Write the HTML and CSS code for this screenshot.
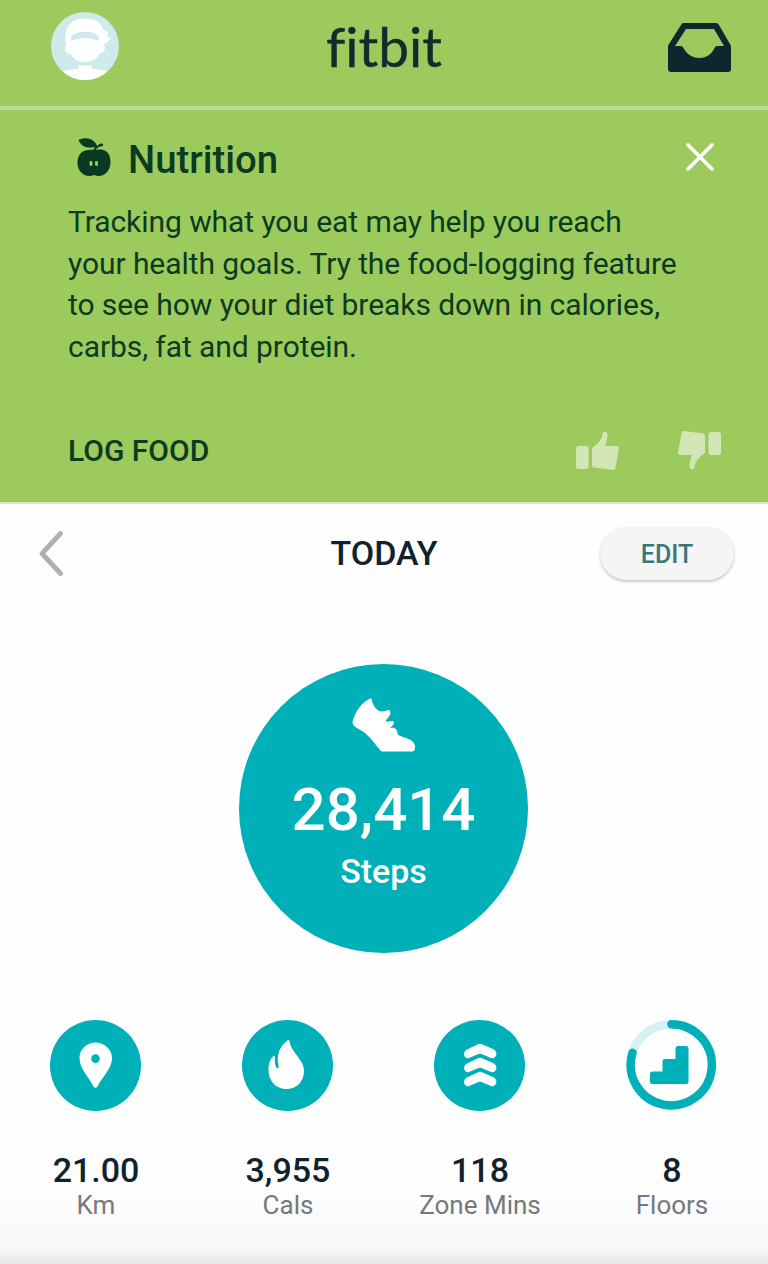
FILE: index.html
```html
<!DOCTYPE html>
<html lang="en">
<head>
<meta charset="utf-8">
<title>Fitbit Today</title>
<link rel="stylesheet" href="styles.css">
</head>
<body>
<header class="topbar">
  <svg class="avatar" viewBox="0 0 68 68">
    <defs><clipPath id="face"><circle cx="34" cy="34" r="34"/></clipPath></defs>
    <circle cx="34" cy="34" r="34" fill="#d0e9ea"/>
    <g clip-path="url(#face)" fill="#fff">
      <path d="M15 33C13 18 17 7 33 6.500C42 6 50 10 52 17C54 20 56 20 58 19C56 22 56 24 57 25L60 27C57 29 56 31 53 32C55 37 53 42 49 41C46 47 41 50 34 50C27 50 22 47 20 42C15 42 13 37 15 33Z"/>
      <path d="M11 61C14 57 20 58 27 57L28 53L31 54L34 53L37 54L40 53L42 57C49 58 54 57 58 61V70H11Z"/>
    </g>
    <path d="M20 29V25C24 18 44 18 48 25V29C40 25 28 25 20 29Z" fill="#d0e9ea"/>
  </svg>
  <h1 class="logo">fitbit</h1>
  <svg class="inbox" viewBox="0 0 63 49">
    <path fill-rule="evenodd" d="M15 0H48Q50 0 51 2L62 21Q63 22 63 24V46Q63 49 60 49H3Q0 49 0 46V24Q0 22 1 21L13 2Q14 0 15 0ZM18 6L7 23H13Q15 23 16 26C23 38 40 38 46 26Q47 23 49 23H56L46 6Z" fill="#10262f"/>
  </svg>
</header>
<section class="tip">
  <div class="tip-head">
    <svg class="apple" viewBox="0 0 34 39">
      <path d="M1.500 2C9-2 18 1 20 8C22 6 24 5 26 6V8C22 8.500 20 9.500 18.500 12C24 11 33 11 33.500 23C34 32 28 38 22 38Q19 38 17 37Q15 38 12 38C6 38 0 32 .5 24C1 14 8 11 16 12L18 9C9 11 4 8 1.500 2Z" fill="#083a22"/>
      <rect x="12.500" y="23" width="3" height="5" rx="1.400" fill="#9dca5c"/><rect x="18" y="23" width="3" height="5" rx="1.400" fill="#9dca5c"/>
    </svg>
    <h2 class="tip-title">Nutrition</h2>
    <svg class="close" viewBox="0 0 28 28"><path d="M2 2L26 26M26 2L2 26" stroke="#fff" stroke-width="3.600" stroke-linecap="round"/></svg>
  </div>
  <p class="tip-text">Tracking what you eat may help you reach<br>your health goals. Try the food-logging feature<br>to see how your diet breaks down in calories,<br>carbs, fat and protein.</p>
  <div class="tip-actions">
    <span class="log">LOG FOOD</span>
    <svg class="thumb" viewBox="0 0 43 39"><path d="M2.500 15H10Q12.500 15 12.500 17.500V35.500Q12.500 38 10 38H2.500Q0 38 0 35.500V17.500Q0 15 2.500 15ZM16 17C22 13 26 8 26.500 3C27-1 32 0 31.500 5Q31 10 29 15H41Q43 15 43 17L39.500 37Q39 39 37 39L18 36.500Q16 36 16 34Z"/></svg>
    <svg class="thumb thumb-down" viewBox="0 0 43 39"><path d="M2.500 15H10Q12.500 15 12.500 17.500V35.500Q12.500 38 10 38H2.500Q0 38 0 35.500V17.500Q0 15 2.500 15ZM16 17C22 13 26 8 26.500 3C27-1 32 0 31.500 5Q31 10 29 15H41Q43 15 43 17L39.500 37Q39 39 37 39L18 36.500Q16 36 16 34Z"/></svg>
  </div>
</section>
<main class="today">
  <div class="daybar">
    <svg class="back" viewBox="0 0 24 45"><path d="M21.500 2.500L3 22.500L21.500 42.500" fill="none" stroke="#b0b0b0" stroke-width="4.800" stroke-linecap="round" stroke-linejoin="round"/></svg>
    <h2 class="day">TODAY</h2>
    <button class="edit">EDIT</button>
  </div>
  <div class="steps">
    <svg class="shoe" viewBox="0 0 63 54"><path d="M18 .5C19 0 20 1 20 3C22 10 27 15 33 13L36 12C38 12 39 14 38 17L35 21C33 23 34 24 37 23.500L40 23C42 23 42.500 25 41 27L38 30C42 29 45 30 46 37C52 40 63 41 63 49Q63 53.500 60 53.500H31Q29 53.500 28 52C23 46 19 40 13 35C8 31 0 29 .5 24C3 14 9 5 18 .5Z" fill="#fff"/></svg>
    <strong class="steps-count">28,414</strong>
    <span class="steps-label">Steps</span>
  </div>
  <div class="stats">
    <div class="stat">
      <svg class="stat-icon" viewBox="0 0 91 91"><circle cx="45.500" cy="45.500" r="45.500" fill="#00b0b9"/><path fill-rule="evenodd" d="M45.500 22.500C54 22.500 62 29 62 38C62 49 52 57 47.500 66.500Q45.500 69 43.500 66.500C39 57 29.500 49 29.500 38C29.500 29 37 22.500 45.500 22.500ZM45.500 34.300A4.300 4.300 0 1 0 45.500 42.900A4.300 4.300 0 1 0 45.500 34.300Z" fill="#fff"/></svg>
      <strong class="value">21.00</strong><span class="label">Km</span>
    </div>
    <div class="stat">
      <svg class="stat-icon" viewBox="0 0 91 91"><circle cx="45.500" cy="45.500" r="45.500" fill="#00b0b9"/><path d="M47.500 21C49 33 62 39 62 51C62 62 54 69 44.500 69C34 69 26.500 61 26.500 50C26.500 44 28 39 31.500 36Q33 35.500 33 37C32.500 42 33 45 34.500 48H36.500C37 44 35 42 36 36C37 28 42 23 46 20Q47.300 19.500 47.500 21Z" fill="#fff"/></svg>
      <strong class="value">3,955</strong><span class="label">Cals</span>
    </div>
    <div class="stat">
      <svg class="stat-icon" viewBox="0 0 91 91"><circle cx="45.500" cy="45.500" r="45.500" fill="#00b0b9"/><path id="chev" d="M33 29.500L44 24.200Q46 23.400 48 24.200L60 29.500Q62.500 31 62.500 34Q61.500 39 57 38L47.500 34Q46 33.400 44.500 34L35 38Q31 39 30 34.500Q30 31 33 29.500Z" fill="#fff"/><use href="#chev" y="14"/><use href="#chev" y="28"/></svg>
      <strong class="value">118</strong><span class="label">Zone Mins</span>
    </div>
    <div class="stat">
      <svg class="stat-icon" viewBox="0 0 91 91"><g fill="none" stroke-width="8.400"><circle cx="45.300" cy="44.800" r="40.600" stroke="#d8f2f3"/><path d="M45.300 4.200A40.600 40.600 0 1 1 6.500 32.800" stroke="#00b0b9" stroke-linecap="round"/></g><path d="M52 26H60Q62.500 26 62.500 28.500V61.500Q62.500 64 60 64H26.500Q24 64 24 61.500V54Q24 51.500 26.500 51.500H36.500V41.500Q36.500 39 39 39H49.500V28.500Q49.500 26 52 26Z" fill="#00b0b9"/></svg>
      <strong class="value">8</strong><span class="label">Floors</span>
    </div>
  </div>
</main>
</body>
</html>
```

FILE: styles.css
```css
* { box-sizing: border-box; }
body { margin: 0; width: 768px; height: 1264px; overflow: hidden; background: #fefefe; font-family: Roboto, sans-serif; }
h1, h2, p { margin: 0; }
svg { display: block; flex: none; }
.topbar { height: 110px; padding: 12px 37px 0 51px; display: grid; grid-template-columns: 1fr auto 1fr; align-items: start; background: #9dca5c; border-bottom: 4px solid #bddb90; }
.avatar { width: 68px; height: 68px; }
.logo { margin-right: 14px; font: 400 55px/68px Lato, sans-serif; color: #102d2d; font-variant-ligatures: none; -webkit-text-stroke: .4px #102d2d; }
.inbox { width: 63px; height: 49px; margin-top: 11px; justify-self: end; }
.tip { height: 394px; padding: 17px 47px 0 68px; background: #9dca5c; border-bottom: 2px solid #d5e7bf; color: #0b3b20; }
.tip-head { display: flex; height: 64px; align-items: center; padding: 0 7px 0 9px; }
.apple { width: 34px; height: 39px; margin-top: -4px; }
.tip-title { flex: 1; margin: 1px 0 0 17px; font-size: 38.300px; font-weight: 500; line-height: 64px; }
.close { width: 28px; height: 28px; margin: -5px 0 0 0; }
.tip-text { margin-top: 10px; font-size: 30px; line-height: 41.500px; letter-spacing: -.07px; white-space: nowrap; }
.tip-actions { display: flex; height: 44px; margin-top: 61px; align-items: center; }
.log { flex: 1; font-size: 30px; font-weight: 500; }
.thumb { width: 43px; height: 39px; fill: #d3e7b6; }
.thumb-down { margin-left: 59px; transform: rotate(180deg); }
.today { height: 760px; padding-top: 17px; background: linear-gradient(#fefefe 0 90%, #f7f7f7 98%, #e8e8e8); }
.daybar { height: 64px; padding: 0 34px 0 39px; display: grid; grid-template-columns: 1fr auto 1fr; align-items: center; }
.back { width: 24px; height: 45px; }
.day { font-size: 34px; font-weight: 500; line-height: 64px; color: #10232c; margin-right: 5px; }
.edit { justify-self: end; width: 134px; height: 53px; padding: 1px 0 0; border: 0; border-radius: 27px; background: #f5f5f5; color: #39777a; font: 500 25px/53px Roboto, sans-serif; box-shadow: 0 2px 3px rgba(0,0,0,.2), 0 0 2px rgba(0,0,0,.06); }
.steps { width: 289px; height: 289px; margin: 79px 0 0 239px; padding-top: 34px; display: flex; flex-direction: column; align-items: center; border-radius: 50%; background: #00b0b9; color: #fff; }
.shoe { width: 63px; height: 54px; }
.steps-count { margin-top: 22px; font-size: 60px; font-weight: 500; line-height: 72px; }
.steps-label { margin-top: 5px; font-size: 34px; font-weight: 500; line-height: 40px; }
.stats { display: grid; grid-template-columns: repeat(4, 1fr); margin-top: 67px; }
.stat { display: flex; flex-direction: column; align-items: center; }
.stat-icon { width: 91px; height: 91px; margin-right: 1px; }
.value { margin-top: 39px; font-size: 34px; font-weight: 500; line-height: 40px; color: #10232c; }
.label { font-size: 26px; line-height: 30px; color: #75797c; }
```
